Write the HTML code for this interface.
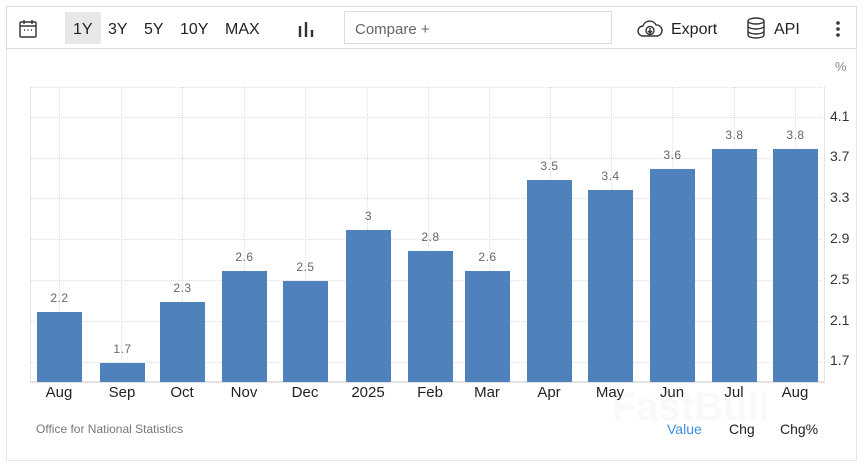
<!DOCTYPE html>
<html><head><meta charset="utf-8"><style>
body{margin:0;width:864px;height:466px;background:#fff;font-family:"Liberation Sans",sans-serif;position:relative;overflow:hidden}
.a{position:absolute}
.box{left:6px;top:6px;width:851px;height:455px;border:1px solid #e6e6e6;box-sizing:border-box}
.tb{left:6px;top:6px;width:851px;height:43px;border:1px solid #dcdcdc;box-sizing:border-box}
.t{font-size:16px;color:#222;top:21px}
.bar{background:#4f81bd;width:45px;bottom:84px}
.v{font-size:12px;color:#666;width:45px;text-align:center;letter-spacing:0.5px}
.m{font-size:15px;color:#222;width:60px;text-align:center;top:384px}
.y{font-size:14px;color:#333;left:830px}
.gh{left:30px;width:792px;border-top:1px dotted #ddd;height:0}
.gv{top:87px;height:295px;border-left:1px dotted #ddd;width:0}
</style></head><body>
<div class="a box"></div>
<div class="a tb"></div>
<svg class="a" style="left:18px;top:19px" width="20" height="20" viewBox="0 0 20 20" fill="none" stroke="#333" stroke-width="1.4"><rect x="2" y="3" width="16" height="15" rx="1"/><path d="M2 7h16M6 1v4M14 1v4"/><path d="M6 11h1M9.5 11h1M13 11h1" stroke-width="1.6"/></svg>
<div class="a" style="left:65px;top:12px;width:36px;height:32px;background:#e8e8e8"></div>
<div class="a t" style="left:73px">1Y</div>
<div class="a t" style="left:108px">3Y</div>
<div class="a t" style="left:144px">5Y</div>
<div class="a t" style="left:180px">10Y</div>
<div class="a t" style="left:225px">MAX</div>
<svg class="a" style="left:297px;top:20px" width="18" height="18"><path d="M3 6v11M9 2v15M15 10v7" stroke="#333" stroke-width="2.4"/></svg>
<div class="a" style="left:344px;top:11px;width:268px;height:33px;border:1px solid #ddd;box-sizing:border-box"></div>
<div class="a t" style="left:355px;color:#666;font-size:15px">Compare +</div>
<svg class="a" style="left:637px;top:19px" width="26" height="20" viewBox="0 0 26 20" fill="none" stroke="#333" stroke-width="1.4"><path d="M7 17H6a5 5 0 0 1 0-10 7 7 0 0 1 13-1 5.5 5.5 0 0 1 1 11H7z"/><circle cx="13" cy="11.5" r="4"/><path d="M13 9v5M11 12l2 2 2-2"/></svg>
<div class="a t" style="left:671px">Export</div>
<svg class="a" style="left:746px;top:17px" width="20" height="22" viewBox="0 0 20 22" fill="none" stroke="#333" stroke-width="1.4"><ellipse cx="10" cy="4" rx="8" ry="3"/><path d="M2 4v14c0 1.7 3.6 3 8 3s8-1.3 8-3V4M2 9c0 1.7 3.6 3 8 3s8-1.3 8-3M2 14c0 1.7 3.6 3 8 3s8-1.3 8-3"/></svg>
<div class="a t" style="left:774px">API</div>
<svg class="a" style="left:835px;top:20px" width="6" height="18"><circle cx="3" cy="3" r="1.8" fill="#333"/><circle cx="3" cy="9" r="1.8" fill="#333"/><circle cx="3" cy="15" r="1.8" fill="#333"/></svg>
<div class="a" style="left:835px;top:59px;font-size:13px;color:#888">%</div>
<div class="a gh" style="top:87px"></div><div class="a gh" style="top:117px"></div><div class="a gh" style="top:158px"></div><div class="a gh" style="top:198px"></div><div class="a gh" style="top:239px"></div><div class="a gh" style="top:280px"></div><div class="a gh" style="top:321px"></div><div class="a gh" style="top:362px"></div>
<div class="a gv" style="left:59px"></div><div class="a gv" style="left:121px"></div><div class="a gv" style="left:182px"></div><div class="a gv" style="left:244px"></div><div class="a gv" style="left:305px"></div><div class="a gv" style="left:367px"></div><div class="a gv" style="left:428px"></div><div class="a gv" style="left:489px"></div><div class="a gv" style="left:550px"></div><div class="a gv" style="left:611px"></div><div class="a gv" style="left:672px"></div><div class="a gv" style="left:734px"></div><div class="a gv" style="left:795px"></div>
<div class="a" style="left:30px;top:87px;width:1px;height:295px;background:#e3e3e3"></div>
<div class="a" style="left:824px;top:87px;width:1px;height:295px;background:#e3e3e3"></div>
<div class="a" style="left:30px;top:381px;width:795px;height:2px;background:#e3e3e3"></div>
<div class="a y" style="top:108px">4.1</div><div class="a y" style="top:148px">3.7</div><div class="a y" style="top:189px">3.3</div><div class="a y" style="top:230px">2.9</div><div class="a y" style="top:271px">2.5</div><div class="a y" style="top:312px">2.1</div><div class="a y" style="top:352px">1.7</div>
<div class="a bar" style="left:37px;top:312px;height:70px"></div><div class="a v" style="left:37px;top:291px">2.2</div>
<div class="a bar" style="left:100px;top:363px;height:19px"></div><div class="a v" style="left:100px;top:342px">1.7</div>
<div class="a bar" style="left:160px;top:302px;height:80px"></div><div class="a v" style="left:160px;top:281px">2.3</div>
<div class="a bar" style="left:222px;top:271px;height:111px"></div><div class="a v" style="left:222px;top:250px">2.6</div>
<div class="a bar" style="left:283px;top:281px;height:101px"></div><div class="a v" style="left:283px;top:260px">2.5</div>
<div class="a bar" style="left:346px;top:230px;height:152px"></div><div class="a v" style="left:346px;top:209px">3</div>
<div class="a bar" style="left:408px;top:251px;height:131px"></div><div class="a v" style="left:408px;top:230px">2.8</div>
<div class="a bar" style="left:465px;top:271px;height:111px"></div><div class="a v" style="left:465px;top:250px">2.6</div>
<div class="a bar" style="left:527px;top:180px;height:202px"></div><div class="a v" style="left:527px;top:159px">3.5</div>
<div class="a bar" style="left:588px;top:190px;height:192px"></div><div class="a v" style="left:588px;top:169px">3.4</div>
<div class="a bar" style="left:650px;top:169px;height:213px"></div><div class="a v" style="left:650px;top:148px">3.6</div>
<div class="a bar" style="left:712px;top:149px;height:233px"></div><div class="a v" style="left:712px;top:128px">3.8</div>
<div class="a bar" style="left:773px;top:149px;height:233px"></div><div class="a v" style="left:773px;top:128px">3.8</div>
<div class="a m" style="left:29px">Aug</div><div class="a m" style="left:92px">Sep</div><div class="a m" style="left:152px">Oct</div><div class="a m" style="left:214px">Nov</div><div class="a m" style="left:275px">Dec</div><div class="a m" style="left:338px">2025</div><div class="a m" style="left:400px">Feb</div><div class="a m" style="left:457px">Mar</div><div class="a m" style="left:519px">Apr</div><div class="a m" style="left:580px">May</div><div class="a m" style="left:642px">Jun</div><div class="a m" style="left:704px">Jul</div><div class="a m" style="left:765px">Aug</div>
<div class="a" style="left:612px;top:385px;font-size:40px;font-weight:bold;color:rgba(0,0,0,0.025)">FastBull</div>
<div class="a" style="left:36px;top:422px;font-size:12px;color:#777">Office for National Statistics</div>
<div class="a" style="left:667px;top:421px;font-size:14px;color:#3a8ee6">Value</div>
<div class="a" style="left:729px;top:421px;font-size:14px;color:#222">Chg</div>
<div class="a" style="left:780px;top:421px;font-size:14px;color:#222">Chg%</div>
</body></html>
